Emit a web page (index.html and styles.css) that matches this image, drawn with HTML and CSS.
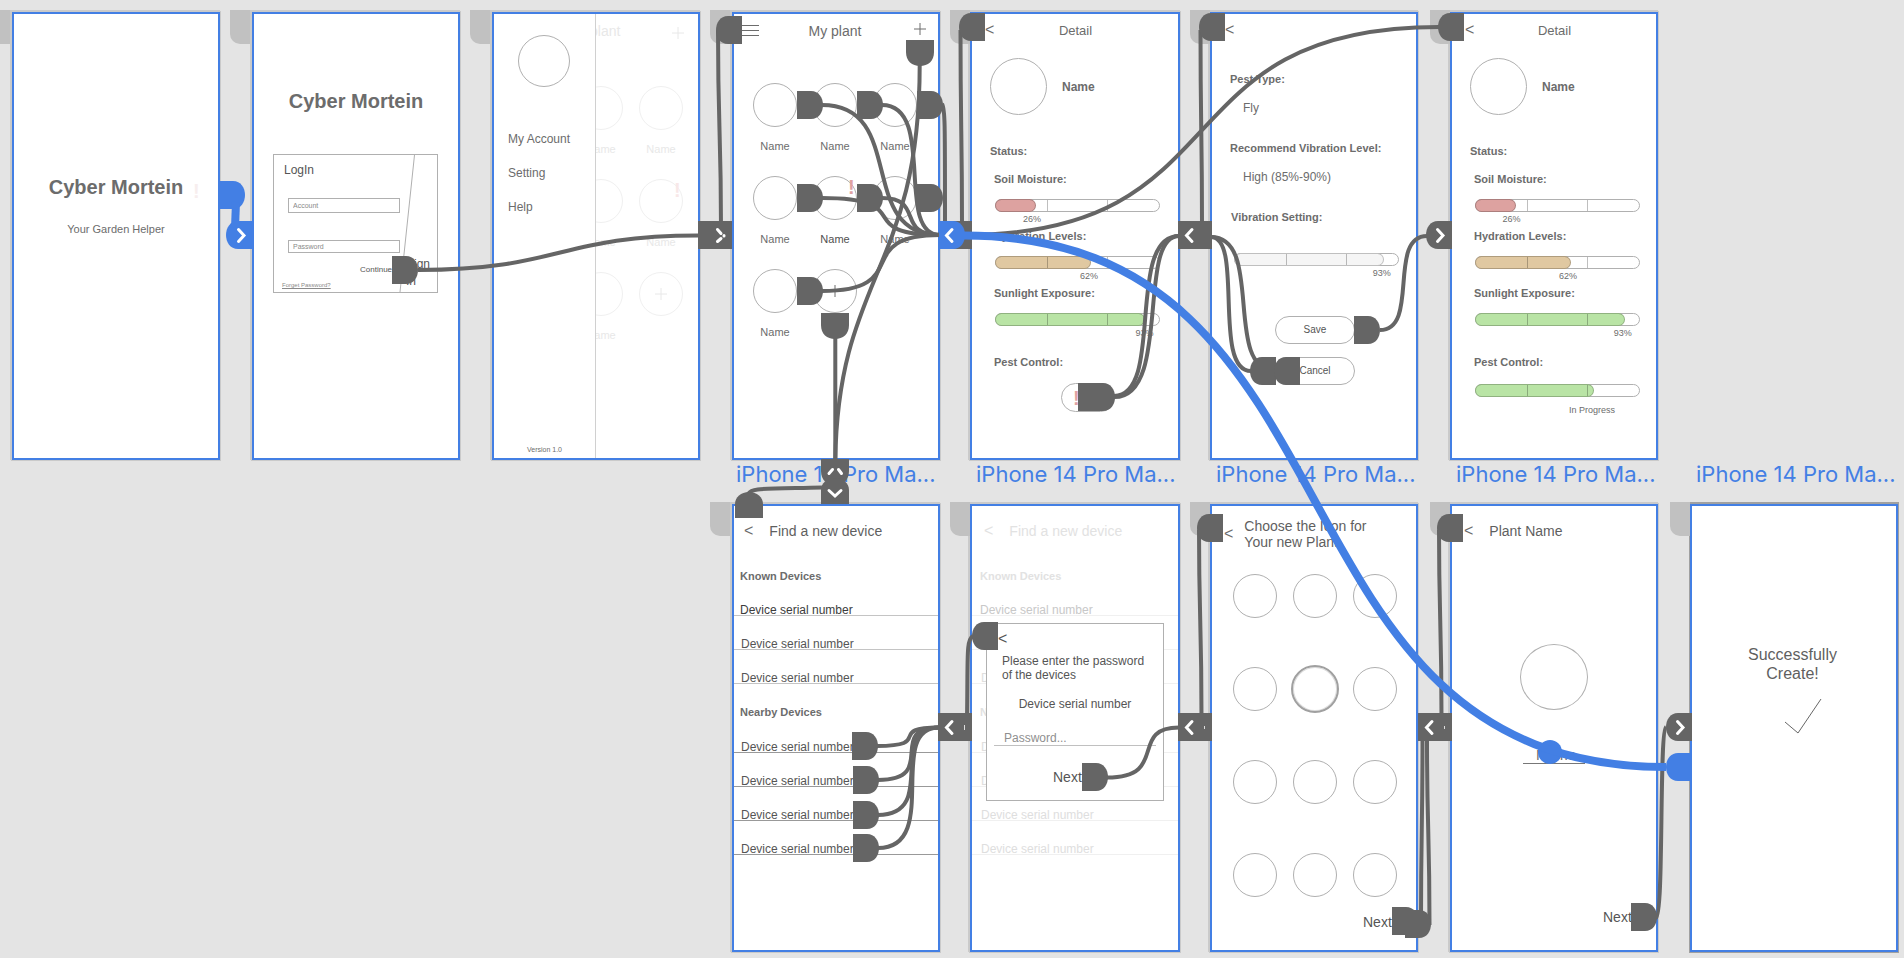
FILE: index.html
```html
<!DOCTYPE html>
<html lang="en">
<head>
<meta charset="utf-8">
<title>Cyber Mortein prototype</title>
<link rel="stylesheet" href="styles.css">
</head>
<body>
<main class="canvas">

  <section class="artboard at-splash">
    <span class="tab"></span>
    <h1 class="brand">Cyber Mortein</h1>
    <p class="tagline">Your Garden Helper</p>
    <span class="alert alert-ghost">!</span>
  </section>

  <section class="artboard at-login">
    <span class="tab"></span>
    <h1 class="brand">Cyber Mortein</h1>
    <form class="login">
      <svg class="login-slant" viewBox="0 0 163 137"><path d="M140.500 0L126 137"/></svg>
      <div class="login-main">
        <h2 class="login-title">LogIn</h2>
        <input class="field" type="text" placeholder="Account" aria-label="Account">
        <input class="field field-password" type="text" placeholder="Password" aria-label="Password">
        <button class="continue" type="button">Continue</button>
        <a class="forgot" href="#">Forget Password?</a>
      </div>
      <button class="signin" type="button">Sign In</button>
    </form>
  </section>

  <section class="artboard stack at-menu">
    <span class="tab"></span>
    <div class="screen screen-dim">
      <header class="topbar topbar-low"><span></span><h2 class="title">My plant</h2><svg class="plus" viewBox="0 0 12 12"><path d="M6 0V12M0 6H12"/></svg></header>
      <div class="plants plants-dim">
        <div class="plant"><span class="pot"></span>Name</div>
        <div class="plant"><span class="pot"></span>Name</div>
        <div class="plant"><span class="pot"></span>Name</div>
        <div class="plant"><span class="pot"></span>Name</div>
        <div class="plant"><span class="pot"></span>Name</div>
        <div class="plant"><span class="pot"><span class="alert">!</span></span>Name</div>
        <div class="plant"><span class="pot"></span>Name</div>
        <div class="plant"><span class="pot"></span>Name</div>
        <div class="plant"><span class="pot"><svg class="plus" viewBox="0 0 12 12"><path d="M6 0V12M0 6H12"/></svg></span></div>
      </div>
    </div>
    <nav class="drawer">
      <span class="avatar"></span>
      <a href="#">My Account</a>
      <a href="#">Setting</a>
      <a href="#">Help</a>
      <small class="version">Version 1.0</small>
    </nav>
  </section>

  <section class="artboard at-plants">
    <span class="tab"></span>
    <header class="topbar">
      <button class="icon-btn" type="button" aria-label="Menu"><svg class="burger" viewBox="0 0 17 16"><path d="M0 2.500H17M0 7.500H17M0 12.500H17"/></svg></button>
      <h2 class="title">My plant</h2>
      <button class="icon-btn icon-end" type="button" aria-label="Add plant"><svg class="plus" viewBox="0 0 12 12"><path d="M6 0V12M0 6H12"/></svg></button>
    </header>
    <div class="plants">
      <div class="plant"><span class="pot"></span>Name</div>
      <div class="plant"><span class="pot"></span>Name</div>
      <div class="plant"><span class="pot"></span>Name</div>
      <div class="plant"><span class="pot"></span>Name</div>
      <div class="plant plant-strong"><span class="pot"><span class="alert">!</span></span>Name</div>
      <div class="plant"><span class="pot"></span>Name</div>
      <div class="plant"><span class="pot"></span>Name</div>
      <div class="plant"><span class="pot"><svg class="plus" viewBox="0 0 12 12"><path d="M6 0V12M0 6H12"/></svg></span></div>
    </div>
  </section>

  <section class="artboard at-detail">
    <span class="tab"></span>
    <header class="detail-bar"><button class="back" type="button" aria-label="Back">&lt;</button><h2 class="detail-title">Detail</h2></header>
    <div class="profile"><span class="portrait"></span><b>Name</b></div>
    <h3 class="status">Status:</h3>
    <div class="readings">
      <div class="reading"><h4>Soil Moisture:</h4><div class="bar" role="meter" aria-label="Soil Moisture" aria-valuenow="26"><i class="fill red" style="width:25%"></i></div><p class="value" style="--fill:25%">26%</p></div>
      <div class="reading"><h4>Hydration Levels:</h4><div class="bar" role="meter" aria-label="Hydration Levels" aria-valuenow="62"><i class="fill tan" style="width:59%"></i></div><p class="value" style="--fill:59%">62%</p></div>
      <div class="reading"><h4>Sunlight Exposure:</h4><div class="bar" role="meter" aria-label="Sunlight Exposure" aria-valuenow="93"><i class="fill green" style="width:92%"></i></div><p class="value" style="--fill:92%">93%</p></div>
      <div class="reading pest"><h4>Pest Control:</h4><button class="pest-btn" type="button" aria-label="Pest alert"><span class="pest-mark">!</span></button></div>
    </div>
  </section>

  <section class="artboard at-pest">
    <span class="tab"></span>
    <header class="detail-bar"><button class="back" type="button" aria-label="Back">&lt;</button></header>
    <dl class="facts">
      <dt>Pest Type:</dt><dd>Fly</dd>
      <dt>Recommend Vibration Level:</dt><dd>High (85%-90%)</dd>
    </dl>
    <label class="setting" for="vibration">Vibration Setting:</label>
    <div class="vibration">
      <div class="bar"><i class="fill pale" style="width:92%"></i><input id="vibration" class="slider" type="range" value="93"></div>
      <p class="value" style="--fill:92%">93%</p>
    </div>
    <div class="actions"><button class="pill" type="button">Save</button><button class="pill" type="button">Cancel</button></div>
  </section>

  <section class="artboard at-progress">
    <span class="tab"></span>
    <header class="detail-bar"><button class="back" type="button" aria-label="Back">&lt;</button><h2 class="detail-title">Detail</h2></header>
    <div class="profile"><span class="portrait"></span><b>Name</b></div>
    <h3 class="status">Status:</h3>
    <div class="readings">
      <div class="reading"><h4>Soil Moisture:</h4><div class="bar" role="meter" aria-label="Soil Moisture" aria-valuenow="26"><i class="fill red" style="width:25%"></i></div><p class="value" style="--fill:25%">26%</p></div>
      <div class="reading"><h4>Hydration Levels:</h4><div class="bar" role="meter" aria-label="Hydration Levels" aria-valuenow="62"><i class="fill tan" style="width:59%"></i></div><p class="value" style="--fill:59%">62%</p></div>
      <div class="reading"><h4>Sunlight Exposure:</h4><div class="bar" role="meter" aria-label="Sunlight Exposure" aria-valuenow="93"><i class="fill green" style="width:92%"></i></div><p class="value" style="--fill:92%">93%</p></div>
      <div class="reading pest"><h4>Pest Control:</h4><div class="bar" role="meter" aria-label="Pest Control" aria-valuenow="73"><i class="fill green" style="width:73%"></i></div><p class="value progress-note" style="--fill:82%">In Progress</p></div>
    </div>
  </section>

  <section class="artboard at-find">
    <span class="label">iPhone 14 Pro Ma...</span><span class="tab"></span>
    <header class="nav-bar"><button class="back" type="button" aria-label="Back">&lt;</button><h2 class="title">Find a new device</h2></header>
    <div class="devices">
      <h3>Known Devices</h3>
      <ul><li class="first">Device serial number</li><li>Device serial number</li><li>Device serial number</li></ul>
      <h3 class="nearby">Nearby Devices</h3>
      <ul class="near"><li>Device serial number</li><li>Device serial number</li><li>Device serial number</li><li>Device serial number</li></ul>
    </div>
  </section>

  <section class="artboard stack at-password">
    <span class="label">iPhone 14 Pro Ma...</span><span class="tab"></span>
    <div class="screen screen-faint">
      <header class="nav-bar"><span class="back">&lt;</span><h2 class="title">Find a new device</h2></header>
      <div class="devices">
        <h3>Known Devices</h3>
        <ul><li class="first">Device serial number</li><li>Device serial number</li><li>Device serial number</li></ul>
        <h3 class="nearby">Nearby Devices</h3>
        <ul class="near"><li>Device serial number</li><li>Device serial number</li><li>Device serial number</li><li>Device serial number</li></ul>
      </div>
    </div>
    <form class="modal">
      <button class="back" type="button" aria-label="Back">&lt;</button>
      <p class="ask">Please enter the password of the devices</p>
      <p class="serial">Device serial number</p>
      <input class="secret" type="text" placeholder="Password..." aria-label="Device password">
      <button class="next" type="button">Next</button>
    </form>
  </section>

  <section class="artboard at-icons">
    <span class="label">iPhone 14 Pro Ma...</span><span class="tab"></span>
    <header class="nav-bar nav-tall"><button class="back" type="button" aria-label="Back">&lt;</button><h2 class="title">Choose the Icon for<br>Your new Plant</h2></header>
    <div class="icons">
      <span class="pot"></span><span class="pot"></span><span class="pot"></span>
      <span class="pot"></span><span class="pot pot-picked"></span><span class="pot"></span>
      <span class="pot"></span><span class="pot"></span><span class="pot"></span>
      <span class="pot"></span><span class="pot"></span><span class="pot"></span>
    </div>
    <button class="next next-corner" type="button">Next</button>
  </section>

  <section class="artboard at-name">
    <span class="label">iPhone 14 Pro Ma...</span><span class="tab"></span>
    <header class="nav-bar"><button class="back" type="button" aria-label="Back">&lt;</button><h2 class="title">Plant Name</h2></header>
    <span class="plant-shape"></span>
    <input class="plant-name" type="text" value="Name" aria-label="Plant name">
    <button class="next next-corner next-high" type="button">Next</button>
  </section>

  <section class="artboard current at-done">
    <span class="label">iPhone 14 Pro Ma...</span><span class="tab"></span>
    <p class="success">Successfully<br>Create!</p>
    <svg class="check" viewBox="0 0 38 36"><path d="M1 24L14 35L37 1"/></svg>
  </section>

  <svg class="wires" width="1904" height="958" viewBox="0 0 1904 958" aria-hidden="true">
    <defs>
      <path id="r" d="M0 0H14C22 0 26 7 26 14S22 28 14 28H0Z"/>
      <path id="l" d="M26 0H12C4 0 0 7 0 14S4 28 12 28H26Z"/>
      <path id="d" d="M0 0V12C0 21 6 26 14 26S28 21 28 12V0Z"/>
      <path id="u" d="M0 26V12C0 5 6 0 14 0S28 5 28 12V26Z"/>
    </defs>
    <g class="line">
      <path d="M418 270C560 270 560 235.500 698 235.500"/>
      <path d="M718 30C718 130 721 130 721 228"/>
      <path d="M822 105C908 105 855 235 940 235"/>
      <path d="M882 105C937 105 894 235 940 235"/>
      <path d="M942 104C945 108 945 120 945 224"/>
      <path d="M822 198C920 198 850 235 940 235"/>
      <path d="M882 198C925 198 895 235 940 235"/>
      <path d="M822 291C915 291 850 235 940 235"/>
      <path d="M835.300 338V470"/>
      <path d="M919.700 65C919.700 270 838 275 835.300 460"/>
      <path d="M748 494C752 488 756 489 822 487.500"/>
      <path d="M960.500 30C960.500 130 962 130 962 225"/>
      <path d="M1200.500 30C1200.500 130 1202 130 1202 225"/>
      <path d="M964 235C1245 235 1157 27 1439 27"/>
      <path d="M1114 396C1165 396 1125 236 1179 236"/>
      <path d="M1114 397C1172 398 1136 236 1179 236"/>
      <path d="M1211 237C1244 237 1212 371 1251 371"/>
      <path d="M1211 237C1265 237 1222 371 1276 371"/>
      <path d="M1380 330C1420 330 1387 236 1427 236"/>
      <path d="M877 746C935 746 885 727.500 939 727.500"/>
      <path d="M878 780C940 780 885 727.500 939 727.500"/>
      <path d="M878 815C940 815 885 727.500 939 727.500"/>
      <path d="M878 848C942 848 885 727.500 939 727.500"/>
      <path d="M973 636C966 640 968 655 967 718"/>
      <path d="M1107 777.500C1170 777.500 1128 727.500 1179 727.500"/>
      <path d="M1199 530C1199 620 1201.500 620 1201.500 718"/>
      <path d="M1439 530C1439 620 1441.500 620 1441.500 718"/>
      <path d="M1422.500 740C1422.500 830 1421 830 1421 920M1427 740C1427 830 1429.500 830 1429.500 925"/>
      <path d="M1656 918C1664 915 1659 731 1666 727"/>
    </g>
    <g class="node">
      <use href="#r" x="392" y="256"/>
      <use href="#l" x="716" y="16"/>
      <use href="#r" x="797" y="91"/><use href="#r" x="857" y="91"/><use href="#r" x="917" y="91"/>
      <use href="#r" x="797" y="184"/><use href="#r" x="857" y="184"/><use href="#r" x="917" y="184"/>
      <use href="#r" x="797" y="277"/>
      <use href="#d" x="906" y="40"/><use href="#d" x="821" y="313"/><use href="#d" x="821" y="459"/>
      <use href="#u" x="821" y="478"/><use href="#u" x="735" y="492"/>
      <use href="#l" x="959" y="13"/><use href="#l" x="1199" y="13"/><use href="#l" x="1438" y="13"/>
      <use href="#r" x="1078" y="383"/><use href="#r" x="1089" y="383"/>
      <use href="#r" x="1354" y="316"/><use href="#l" x="1250" y="357"/><use href="#l" x="1274" y="357"/>
      <use href="#r" x="852" y="732"/><use href="#r" x="853" y="766"/><use href="#r" x="853" y="801"/><use href="#r" x="853" y="834"/>
      <use href="#l" x="972" y="622"/><use href="#r" x="1082" y="763"/>
      <use href="#l" x="1197" y="514"/><use href="#l" x="1437" y="514"/>
      <use href="#r" x="1392" y="907"/><use href="#r" x="1405" y="910"/><use href="#r" x="1631" y="903"/>
      <use href="#l" x="1666" y="713"/><use href="#l" x="1426" y="221"/>
      <path d="M698 221H732V249H698ZM950 221H972V249H950ZM1178 221H1212V249H1178ZM938 713H972V741H938ZM1178 713H1212V741H1178ZM1418 713H1452V741H1418Z"/>
    </g>
    <g class="accent-node">
      <use href="#r" x="219" y="181"/><use href="#l" x="226" y="221"/>
      <use href="#r" x="939" y="221"/><use href="#l" x="1666" y="753"/>
      <circle cx="1550" cy="752" r="12"/>
    </g>
    <g class="accent-line">
      <path d="M236 202L235 228"/>
      <path d="M964 235.500C1375 235.500 1255 767 1666 767"/>
    </g>
    <g class="chevron">
      <path d="M238.500 229.500L244 235.500L238.500 241.500"/>
      <path d="M717.500 229.500L721 233.500M721 238.500L717.500 241.500M724 235.500V236"/>
      <path d="M952 229.500L946.500 235.500L952 241.500"/>
      <path d="M1192 229.500L1186.500 235.500L1192 241.500"/>
      <path d="M1437.500 229.500L1443 235.500L1437.500 241.500"/>
      <path d="M952 721.500L946.500 727.500L952 733.500"/>
      <path d="M1192 721.500L1186.500 727.500L1192 733.500"/>
      <path d="M1432 721.500L1426.500 727.500L1432 733.500"/>
      <path d="M1677.500 721.500L1683 727.500L1677.500 733.500"/>
      <path d="M829 490.500L835 496L841 490.500"/>
      <path d="M829 473.500L832.500 469.500M838.500 469.500L841.500 473.500"/>
    </g>
    <path class="dots" d="M964.500 725V730M1204.500 726V729M1444.500 726V729"/>
  </svg>
</main>
</body>
</html>
```

FILE: styles.css
```css
:root {
  --blue: #437fe4;
  --ink: #6c6c6c;
  --node: #656565;
  --hair: #b0b0b0;
}
* { box-sizing: border-box; }
body { margin: 0; background: #e4e4e4; overflow: hidden; }
h1, h2, h3, h4, p, ul, dl, dd { margin: 0; padding: 0; }
button, input { font: inherit; color: inherit; background: none; border: 0; padding: 0; margin: 0; border-radius: 0; outline: 0; }
button { text-align: left; }

.canvas {
  position: relative;
  min-height: 100vh;
  font: 12px/14px "Liberation Sans", Arial, sans-serif;
  color: var(--ink);
}

/* Artboards placed freely on the canvas */
.artboard {
  position: absolute;
  display: flex;
  flex-direction: column;
  width: 208px;
  height: 448px;
  background: #fff;
  border: 2px solid var(--blue);
  box-shadow: 0 0 0 1px #cacaca, -1px -1px 0 1px #cacaca;
}
.current { box-shadow: 0 0 0 1px #a0a0a0, 0 -1px 0 1px #a0a0a0; }
.at-splash { left: 12px; top: 12px; }
.at-login { left: 252px; top: 12px; }
.at-menu { left: 492px; top: 12px; }
.at-plants { left: 732px; top: 12px; }
.at-detail { left: 970px; top: 12px; width: 210px; }
.at-pest { left: 1210px; top: 12px; }
.at-progress { left: 1450px; top: 12px; }
.at-find { left: 732px; top: 504px; }
.at-password { left: 970px; top: 504px; width: 210px; }
.at-icons { left: 1210px; top: 504px; }
.at-name { left: 1450px; top: 504px; }
.at-done { left: 1690px; top: 504px; }

.tab {
  position: absolute;
  left: -22px;
  top: -4px;
  width: 20px;
  height: 34px;
  background: #c1c1c1;
  border-bottom-left-radius: 10px;
}
.at-splash .tab, .at-login .tab, .at-menu .tab, .at-plants .tab, .at-find .tab { left: -24px; }
.label {
  position: absolute;
  left: 4px;
  top: -45px;
  font: 22px/26px Inter, sans-serif;
  color: var(--blue);
  white-space: nowrap;
}
.at-find .label { left: 2px; }
.stack { display: grid; grid-template: 1fr / 1fr; }
.stack > .screen, .stack > .drawer, .stack > .modal { grid-area: 1 / 1; }

/* Splash and login */
.brand { font-size: 20px; line-height: 24px; text-align: center; }
.at-splash .brand { margin-top: 161px; }
.at-login .brand { margin-top: 75px; }
.tagline { margin-top: 23px; font-size: 11px; text-align: center; }
.alert { position: absolute; left: 34px; top: 0; font: bold 20px/20px "Liberation Sans", Arial, sans-serif; color: #e0a2a2; }
.alert-ghost { left: 179px; top: 167px; color: #f7eeee; }

.login {
  position: relative;
  display: flex;
  width: 165px;
  height: 139px;
  margin: 41px 0 0 19px;
  border: 1px solid var(--hair);
}
.login-slant { position: absolute; inset: 0; fill: none; stroke: var(--hair); }
.login-main { display: flex; flex-direction: column; width: 132px; padding: 8px 0 0 8px; }
.login-title { margin-left: 2px; font-size: 12px; font-weight: normal; color: #555; }
.field { width: 112px; height: 15px; margin: 21px 0 0 6px; padding: 0 4px; border: 1px solid var(--hair); font-size: 7px; line-height: 8px; }
.field-password { height: 13px; margin-top: 27px; }
.field::placeholder { color: #8a8a8a; opacity: 1; }
.continue { margin: 12px 0 0 78px; font-size: 8px; line-height: 10px; color: #555; }
.forgot { margin-top: 6px; font-size: 6px; line-height: 8px; color: #8a8a8a; }
.signin { align-self: flex-end; width: 25px; margin-bottom: 2px; line-height: 17px; color: #555; }

/* Plant list and drawer */
.topbar { display: grid; grid-template-columns: 1fr auto 1fr; align-items: start; padding: 9px 12px 0 10px; }
.at-plants .burger { margin-left: -2px; }
.topbar-low { align-items: end; padding-right: 14px; }
.title { font-size: 14px; line-height: 16px; font-weight: normal; }
.topbar .plus { justify-self: end; }
.icon-btn { display: flex; }
.icon-end { justify-content: flex-end; }
.plus { width: 12px; height: 12px; fill: none; stroke: currentColor; stroke-width: 1; }
.burger { width: 17px; height: 16px; fill: none; stroke: currentColor; }
.plants { display: grid; grid-template-columns: repeat(3, 60px); grid-auto-rows: 93px; margin: 44px 0 0 11px; font-size: 11px; }
.plants-dim { margin: 47px 0 0 17px; }
.plant { display: flex; flex-direction: column; align-items: center; gap: 12px; }
.plant-strong { color: #505050; }
.pot { position: relative; display: grid; place-items: center; width: 44px; height: 44px; border: 1px solid var(--hair); border-radius: 50%; }
.screen-dim { color: #e8e8e8; }
.screen-dim .pot { border-color: #f0f0f0; }
.screen-dim .alert { color: #f8e8e8; }
.drawer { display: flex; flex-direction: column; justify-self: start; gap: 19px; width: 102px; padding: 21px 0 4px 14px; background: #fff; border-right: 1px solid #d0d0d0; z-index: 1; }
.drawer a { color: inherit; text-decoration: none; line-height: 15px; }
.avatar { width: 52px; height: 52px; margin: 0 0 26px 10px; border: 1px solid var(--hair); border-radius: 50%; }
.version { margin: auto 14px 0 0; font-size: 7px; line-height: 8px; text-align: center; }

/* Detail screens */
.detail-bar { display: grid; grid-template-columns: 1fr auto 1fr; padding: 8px 12px 0 13px; }
.back { font-size: 16px; line-height: 16px; }
.detail-title { font-size: 13px; line-height: 18px; font-weight: normal; height: 16px; }
.profile { display: flex; align-items: center; gap: 15px; margin: 20px 0 0 18px; }
.portrait { width: 57px; height: 57px; border: 1px solid var(--hair); border-radius: 50%; }
.status, .reading h4, .facts dt, .setting { font-size: 11px; line-height: 14px; font-weight: bold; }
.status { margin: 29px 0 0 18px; }
.readings { display: flex; flex-direction: column; gap: 5px; margin: 14px 16px 0 22px; }
.bar { position: relative; width: 165px; height: 13px; border: 1px solid var(--hair); border-radius: 7px; }
.reading .bar { margin: 13px 0 0 1px; }
.bar::before, .bar::after { content: ""; position: absolute; top: 0; bottom: 0; width: 1px; background: #00000040; z-index: 1; }
.bar::before { left: 51px; }
.bar::after { left: 111px; }
.fill { position: absolute; left: -1px; top: -1px; bottom: -1px; border: 1px solid #00000038; border-radius: 7px; background-clip: border-box; }
.red { background-color: #dda2a0; }
.tan { background-color: #e0c8a1; }
.green { background-color: #b9e4a5; }
.pale { background-color: #f5f5f5; }
.value { width: calc(var(--fill) + 5px); margin-top: 2px; font-size: 9px; line-height: 10px; text-align: right; white-space: nowrap; }
.pest { margin-top: 12px; }
.pest .bar { margin-top: 15px; }
.progress-note { margin-top: 8px; }
.pest-btn { display: block; width: 54px; height: 29px; margin: 14px 0 0 67px; padding-left: 11px; border: 1px solid var(--hair); border-radius: 15px; }
.pest-mark { font-size: 20px; line-height: 20px; font-weight: bold; color: #e0a2a2; }
.facts { display: flex; flex-direction: column; margin: 34px 0 0 18px; }
.facts dd { margin: 15px 0 26px 13px; }
.setting { margin-left: 19px; }
.vibration { width: 165px; margin: 29px 0 0 22px; }
.slider { position: absolute; inset: 0; width: 100%; opacity: 0; z-index: 2; }
.actions { display: flex; flex-direction: column; gap: 13px; margin: 38px 0 0 63px; }
.pill { width: 80px; height: 28px; border: 1px solid var(--hair); border-radius: 14px; font-size: 10px; line-height: 12px; text-align: center; color: #555; }

/* Device search */
.nav-bar { display: flex; gap: 16px; padding: 17px 0 0 10px; }
.devices { margin-top: 30px; }
.devices h3 { padding-left: 6px; font-size: 11px; line-height: 14px; }
.devices .nearby { margin-top: 21px; }
.devices ul { list-style: none; }
.devices li { margin-bottom: 1px; padding: 22px 0 0 7px; line-height: 10px; border-bottom: 1px solid #c4c4c4; color: #555; }
.devices .near li { border-color: #999; }
.devices .near { padding-top: 1px; }
.devices .first { color: #3c3c3c; padding-left: 6px; }
.screen-faint { padding-left: 2px; color: #e2e2e2; }
.screen-faint .devices { margin-left: -2px; }
.screen-faint .devices h3 { padding-left: 8px; }
.screen-faint .devices li { padding-left: 9px; color: #dedede; border-color: #f0f0f0; }
.screen-faint .devices li.first { padding-left: 8px; color: #c8c8c8; }
.modal { display: flex; flex-direction: column; align-items: center; width: 178px; height: 178px; margin: 117px 0 0 14px; background: #fff; border: 1px solid var(--hair); z-index: 1; color: #555; }
.modal .back { align-self: flex-start; margin: 7px 0 0 11px; }
.ask { align-self: stretch; margin: 7px 10px 0 15px; }
.serial { margin-top: 15px; }
.secret { width: 162px; margin-top: 20px; padding: 0 10px; height: 15px; border-bottom: 1px solid #c0c0c0; }
.secret::placeholder { color: #8f8f8f; opacity: 1; }
.next { font-size: 14px; line-height: 16px; color: #555; }
.modal .next { align-self: flex-start; margin: 23px 0 0 66px; }

/* Icon picker, naming, confirmation */
.nav-bar .title { color: #5f5f5f; }
.screen-faint .title { color: inherit; }
.nav-tall { gap: 11px; align-items: center; padding-top: 12px; }
.at-icons .nav-bar, .at-name .nav-bar { padding-left: 12px; }
.icons { display: grid; grid-template-columns: repeat(3, 60px); grid-auto-rows: 93px; justify-items: center; margin: 24px 0 0 13px; }
.pot-picked { width: 48px; height: 48px; margin: -2px; border: 2px solid #a0a0a0; box-shadow: inset 0 0 0 1px #ddd; }
.next-corner { margin: -32px 0 0 151px; }
.plant-shape { width: 68px; height: 66px; margin: 105px auto 0; border: 1px solid var(--hair); border-radius: 50%; }
.plant-name { width: 62px; height: 19px; margin: 35px auto 0; padding-left: 13px; border-bottom: 1px solid #777; font-size: 15px; line-height: 18px; }
.next-high { margin-top: 145px; }
.success { margin: 139px 3px 0 0; font-size: 16px; line-height: 19px; text-align: center; color: #5f5f5f; }
.check { width: 38px; height: 36px; margin: 15px 0 0 92px; fill: none; stroke: #666; stroke-width: 1; }

/* Prototype connections */
.wires { position: absolute; left: 0; top: 0; pointer-events: none; z-index: 2; }
.line { fill: none; stroke: var(--node); stroke-width: 4; }
.node { fill: var(--node); }
.accent-line { fill: none; stroke: var(--blue); stroke-width: 8; }
.accent-node { fill: var(--blue); }
.chevron { fill: none; stroke: #fff; stroke-width: 3; stroke-linecap: round; }
.dots { stroke: #ddd; stroke-width: 1; }
```
